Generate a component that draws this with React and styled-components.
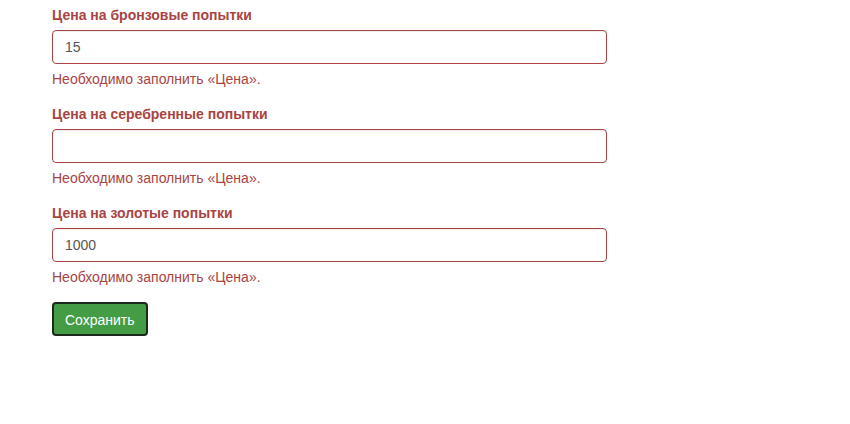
import styled, { createGlobalStyle } from "styled-components";

const GlobalStyle = createGlobalStyle`
body {
  margin: 0;
  background: #fff;
  font-family: "Liberation Sans", Arial, sans-serif;
  font-size: 14px;
  line-height: 20px;
  color: #333;
}
`;

const Form = styled.form`
  width: 555px;
  padding: 5px 0 0 52px;
`;

const Group = styled.div`
  margin-bottom: 15px;
`;

const Label = styled.label`
  display: block;
  margin-bottom: 5px;
  font-weight: bold;
  color: #a94442;
`;

const Input = styled.input`
  display: block;
  box-sizing: border-box;
  width: 100%;
  height: 34px;
  padding: 6px 12px;
  font: inherit;
  color: #555;
  background: #fff;
  border: 1px solid #a94442;
  border-radius: 4px;
  box-shadow: inset 0 1px 1px rgba(0, 0, 0, 0.075);
  outline: none;
`;

const Help = styled.span`
  display: block;
  margin-top: 5px;
  margin-bottom: 10px;
  color: #a94442;
`;

const Button = styled.button`
  box-sizing: border-box;
  height: 34px;
  padding: 6px 11px;
  font: inherit;
  color: #fff;
  background: #449d44;
  border: 2px solid #1c2a1c;
  border-radius: 4px;
  cursor: pointer;
`;

const fields = [
  { label: "Цена на бронзовые попытки", value: "15" },
  { label: "Цена на серебренные попытки", value: "" },
  { label: "Цена на золотые попытки", value: "1000" },
];

const App = () => {
  return (
    <>
      <GlobalStyle />
      <Form onSubmit={(e) => e.preventDefault()}>
        {fields.map((field) => (
          <Group key={field.label}>
            <Label>{field.label}</Label>
            <Input type="text" defaultValue={field.value} />
            <Help>Необходимо заполнить «Цена».</Help>
          </Group>
        ))}
        <Button type="submit">Сохранить</Button>
      </Form>
    </>
  );
};

export default App;
